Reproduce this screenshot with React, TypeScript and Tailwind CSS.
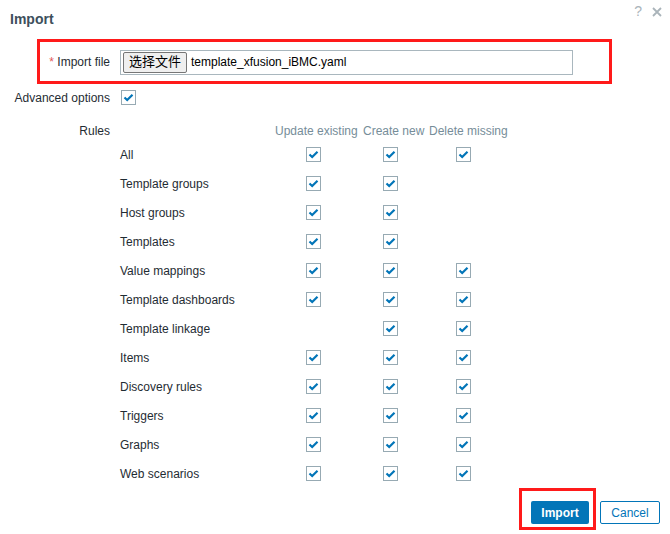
import React from "react";

const Check = () => (
  <span className="flex h-[15px] w-[15px] items-center justify-center border border-[#97aab3] bg-white">
    <svg width="11" height="9" viewBox="0 0 11 9">
      <path d="M1.5 4.5 L4.2 7 L9.5 1.8" fill="none" stroke="#0275b8" strokeWidth="2.2" />
    </svg>
  </span>
);

const rows: [string, boolean, boolean, boolean][] = [
  ["All", true, true, true],
  ["Template groups", true, true, false],
  ["Host groups", true, true, false],
  ["Templates", true, true, false],
  ["Value mappings", true, true, true],
  ["Template dashboards", true, true, true],
  ["Template linkage", false, true, true],
  ["Items", true, true, true],
  ["Discovery rules", true, true, true],
  ["Triggers", true, true, true],
  ["Graphs", true, true, true],
  ["Web scenarios", true, true, true],
];

export default function App() {
  return (
    <div
      className="relative h-[534px] w-[670px] bg-white text-[12px] text-[#1f2c33]"
      style={{ fontFamily: '"Liberation Sans", Arial, "Noto Sans CJK SC", sans-serif' }}
    >
      <div className="flex h-[36px] items-start justify-between pl-[10px] pr-[8px]">
        <div className="mt-[9px] text-[14px] font-bold text-[#3d4f5c]">Import</div>
        <div className="mt-[1px] flex items-center gap-[10px] text-[14px] text-[#aab4ba]">
          <span>?</span>
          <svg width="10" height="10" viewBox="0 0 10 10" className="mt-[1px]">
            <path d="M1 1 L9 9 M9 1 L1 9" stroke="#aab4ba" strokeWidth="1.8" />
          </svg>
        </div>
      </div>

      <div className="ml-[37px] mt-[3px] flex h-[45px] w-[575px] items-center border-[3px] border-[#ff1a1a]">
        <div className="w-[70px] text-right">
          <span className="text-[#e45959]">*</span> Import file
        </div>
        <div className="ml-[10px] mt-[1px] flex h-[25px] w-[453px] items-center border border-[#a9b7be] pl-[2px]">
          <span className="flex h-[21px] items-center rounded-[2px] border border-[#767676] bg-[#efefef] px-[5px] text-[13px] text-black">
            选择文件
          </span>
          <span className="ml-[4px] text-[12px] text-black">template_xfusion_iBMC.yaml</span>
        </div>
      </div>

      <div className="mt-[6px] flex h-[15px] items-center">
        <div className="w-[110px] text-right">Advanced options</div>
        <div className="ml-[11px]">
          <Check />
        </div>
      </div>

      <div className="mt-[19px] flex">
        <div className="w-[110px] text-right leading-[14px]">Rules</div>
        <div className="ml-[10px]">
          <div className="flex h-[14px] items-center leading-[14px] text-[#768d99]">
            <div className="w-[155px]" />
            <div className="w-[88px]">Update existing</div>
            <div className="w-[66px]">Create new</div>
            <div className="w-[80px]">Delete missing</div>
          </div>
          <div className="mt-[2px]">
            {rows.map(([label, a, b, c]) => (
              <div key={label} className="flex h-[29px] items-center">
                <div className="w-[155px]">{label}</div>
                <div className="w-[88px] pl-[31px]">{a && <Check />}</div>
                <div className="w-[66px] pl-[20px]">{b && <Check />}</div>
                <div className="w-[80px] pl-[27px]">{c && <Check />}</div>
              </div>
            ))}
          </div>
        </div>
      </div>

      <div className="flex items-end justify-end pr-[10px]">
        <div className="border-[3px] border-[#ff1a1a] pb-[3px] pl-[9px] pr-[4px] pt-[10px]">
          <button className="flex h-[23px] w-[58px] items-center justify-center rounded-[2px] bg-[#0275b8] font-bold text-white">
            Import
          </button>
        </div>
        <button className="mb-[6px] ml-[4px] flex h-[23px] w-[60px] items-center justify-center rounded-[2px] border border-[#0275b8] bg-white text-[#0275b8]">
          Cancel
        </button>
      </div>
    </div>
  );
}
